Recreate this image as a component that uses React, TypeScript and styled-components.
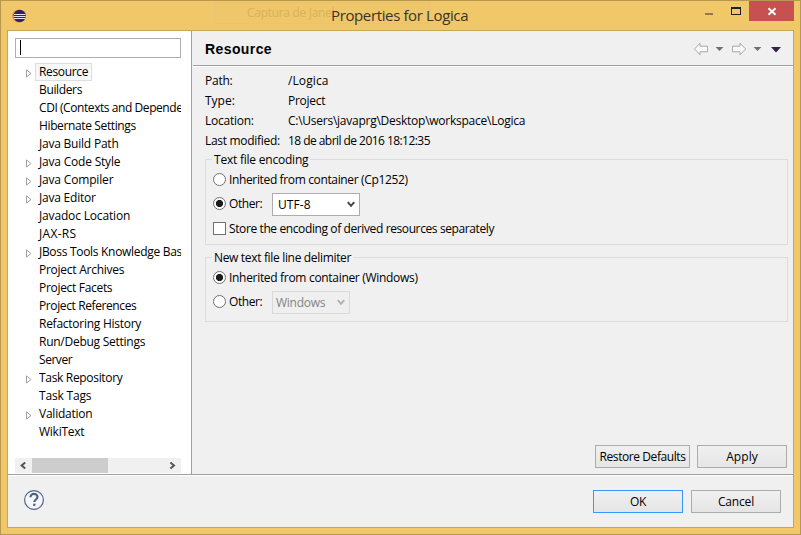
import React from "react";
import styled, { createGlobalStyle } from "styled-components";

const GlobalStyle = createGlobalStyle`
  * { box-sizing: border-box; }
  body { margin: 0; overflow: hidden; }
  svg { display: block; flex: none; }
`;

const Window = styled.div`
  width: 801px;
  height: 535px;
  display: flex;
  flex-direction: column;
  padding: 0 6px 6px;
  border: 1px solid #b8984f;
  background: #f0c869;
  font: 12px/18px "Open Sans", "Noto Sans", sans-serif;
  color: #000;
`;

const TitleBar = styled.header`
  position: relative;
  flex: none;
  display: flex;
  justify-content: space-between;
  height: 29px;
`;

const AppIcon = styled.div`
  padding: 8px 0 0 5px;
`;

const Ghost = styled.div`
  position: absolute;
  left: 207px;
  top: 1px;
  width: 216px;
  height: 22px;
  border: 1px solid #ecc272;
  background: #eec76b;
  padding-left: 32px;
  line-height: 19px;
  letter-spacing: -0.3px;
  color: #d9b15a;
`;

const Title = styled.h1`
  position: absolute;
  left: 324px;
  top: 3px;
  margin: 0;
  font-size: 15px;
  font-weight: 400;
  line-height: 22px;
  letter-spacing: -0.37px;
  white-space: nowrap;
  color: #3b3426;
`;

const Controls = styled.div`
  display: flex;
  align-items: flex-start;
  margin-left: auto;
`;

const CloseButton = styled.div`
  display: flex;
  width: 45px;
  height: 20px;
  background: #c75050;
`;

const Client = styled.main`
  flex: 1;
  display: flex;
  flex-direction: column;
  border: 1px solid #c9a655;
  background: #f0f0f0;
`;

const Body = styled.div`
  display: flex;
  height: 443px;
`;

const Sidebar = styled.nav`
  width: 184px;
  flex: none;
  padding: 7px 10px 0 7px;
  background: #fff;
  border-right: 1px solid #a0a0a0;
`;

const Filter = styled.div`
  width: 166px;
  height: 20px;
  margin-bottom: 5px;
  padding: 1px 0 0 4px;
  border: 1px solid #abadb3;
`;

const Caret = styled.div`
  width: 1px;
  height: 15px;
  background: #000;
`;

const Tree = styled.div`
  width: 166px;
  height: 395px;
  overflow: hidden;
`;

const TreeRow = styled.div`
  display: flex;
  height: 18px;
`;

const Twisty = styled.div`
  width: 20px;
  flex: none;
  padding: 6px 0 0 11px;
`;

const TreeLabel = styled.span<{ $ls: number; $selected?: boolean }>`
  height: 18px;
  padding: 0 3px;
  border: 1px solid ${(p) => (p.$selected ? "#dedede" : "transparent")};
  background: ${(p) => (p.$selected ? "#f7f7f7" : "transparent")};
  line-height: 15px;
  letter-spacing: ${(p) => p.$ls}px;
  white-space: nowrap;
`;

const ScrollBar = styled.div`
  display: flex;
  align-items: center;
  width: 166px;
  height: 15px;
  background: #f0f0f0;
`;

const Thumb = styled.div`
  width: 76px;
  height: 15px;
  margin-right: 56px;
  background: #cdcdcd;
`;

const Content = styled.section`
  flex: 1;
  display: flex;
  flex-direction: column;
  margin-left: 1px;
`;

const Header = styled.div`
  display: flex;
  justify-content: space-between;
  height: 36px;
  flex: none;
  padding: 0 11px 0 12px;
  border-bottom: 1px solid #fff;
  box-shadow: inset 0 -1px #a0a0a0;
`;

const Heading = styled.h2`
  margin: 0;
  font: bold 14px/36px "Liberation Sans", Arial, sans-serif;
  letter-spacing: 0.4px;
`;

const Page = styled.div`
  flex: 1;
  display: flex;
  flex-direction: column;
  padding: 4px 5px 6px 12px;
`;

const Properties = styled.dl`
  display: grid;
  grid-template-columns: 83px 1fr;
  grid-auto-rows: 20px;
  margin: 0;
  line-height: 20px;
`;

const Term = styled.dt`
  white-space: nowrap;
`;

const Value = styled.dd`
  margin: 0;
`;

const Text = styled.span<{ $ls: number; $width?: number }>`
  width: ${(p) => (p.$width ? `${p.$width}px` : "auto")};
  letter-spacing: ${(p) => p.$ls}px;
  white-space: nowrap;
`;

const Group = styled.fieldset<{ $height: number; $top: number }>`
  min-width: 0;
  height: ${(p) => p.$height}px;
  margin: ${(p) => p.$top}px 0 0;
  padding: 0 7px;
  border: 1px solid #dcdcdc;
`;

const Legend = styled.div`
  width: fit-content;
  height: 18px;
  margin-top: -9px;
  margin-left: -1px;
  padding: 0 2px;
  background: #f0f0f0;
`;

const Option = styled.div<{ $height: number }>`
  display: flex;
  align-items: center;
  height: ${(p) => p.$height}px;
`;

const Radio = styled.span<{ $checked?: boolean }>`
  width: 13px;
  height: 13px;
  flex: none;
  margin-right: 3px;
  border: 1px solid #707070;
  border-radius: 50%;
  background: ${(p) =>
    p.$checked ? "radial-gradient(circle, #1c1c1c 3.2px, #fff 4px)" : "#fff"};
`;

const Check = styled.span`
  width: 13px;
  height: 13px;
  flex: none;
  margin-right: 3px;
  border: 1px solid #707070;
  background: #fff;
`;

const Combo = styled.div<{ $width: number; $disabled?: boolean }>`
  display: flex;
  align-items: center;
  justify-content: space-between;
  width: ${(p) => p.$width}px;
  height: 23px;
  margin: 2px 0 0 10px;
  padding: 0 4px 0 ${(p) => (p.$disabled ? 3 : 5)}px;
  border: 1px solid ${(p) => (p.$disabled ? "#d9d9d9" : "#abadb3")};
  background: ${(p) => (p.$disabled ? "#efefef" : "#fff")};
  color: ${(p) => (p.$disabled ? "#838383" : "#000")};
  line-height: 19px;
`;

const Actions = styled.div`
  display: flex;
  justify-content: flex-end;
  gap: 7px;
  margin: auto 1px 0 0;
`;

const Button = styled.button<{ $width?: number; $ls: number; $primary?: boolean }>`
  width: ${(p) => p.$width ?? 90}px;
  height: 23px;
  padding: 1px 0 0;
  border: 1px solid ${(p) => (p.$primary ? "#3399ff" : "#acacac")};
  background: linear-gradient(#f0f0f0, #e5e5e5);
  font: inherit;
  line-height: 20px;
  letter-spacing: ${(p) => p.$ls}px;
  color: #000;
  white-space: nowrap;
`;

const Footer = styled.footer`
  flex: 1;
  display: flex;
  align-items: flex-start;
  gap: 8px;
  padding: 15px 12px 0 15px;
  border-top: 1px solid #a0a0a0;
  box-shadow: inset 0 1px #fff;
`;

const HelpSlot = styled.div`
  margin: -1px auto 0 0;
`;

const NavIcons = styled.div`
  display: flex;
  padding-top: 11px;
`;

type Item = { text: string; ls: number; parent?: boolean };

const items: Item[] = [
  { text: "Resource", ls: -0.35, parent: true },
  { text: "Builders", ls: -0.36 },
  { text: "CDI (Contexts and Dependency Injection)", ls: -0.43 },
  { text: "Hibernate Settings", ls: -0.37 },
  { text: "Java Build Path", ls: -0.22 },
  { text: "Java Code Style", ls: -0.2, parent: true },
  { text: "Java Compiler", ls: -0.17, parent: true },
  { text: "Java Editor", ls: -0.22, parent: true },
  { text: "Javadoc Location", ls: -0.16 },
  { text: "JAX-RS", ls: 0.3 },
  { text: "JBoss Tools Knowledge Base", ls: -0.3, parent: true },
  { text: "Project Archives", ls: -0.26 },
  { text: "Project Facets", ls: -0.31 },
  { text: "Project References", ls: -0.39 },
  { text: "Refactoring History", ls: -0.26 },
  { text: "Run/Debug Settings", ls: -0.26 },
  { text: "Server", ls: -0.45 },
  { text: "Task Repository", ls: -0.32, parent: true },
  { text: "Task Tags", ls: -0.18 },
  { text: "Validation", ls: -0.23, parent: true },
  { text: "WikiText", ls: -0.25 },
];

const properties = [
  { name: "Path:", nameLs: -0.25, value: "/Logica", valueLs: 0.1 },
  { name: "Type:", nameLs: 0, value: "Project", valueLs: -0.25 },
  {
    name: "Location:",
    nameLs: -0.25,
    value: "C:\\Users\\javaprg\\Desktop\\workspace\\Logica",
    valueLs: -0.25,
  },
  {
    name: "Last modified:",
    nameLs: -0.3,
    value: "18 de abril de 2016 18:12:35",
    valueLs: -0.55,
  },
];

const Arrow = () => (
  <svg width="7" height="9" viewBox="0 0 7 9">
    <path d="M.5.9v7.2L5 4.5z" fill="#fff" stroke="#a0a0a0" />
  </svg>
);

const ComboChevron = ({ color }: { color: string }) => (
  <svg width="8" height="7" viewBox="0 0 8 7">
    <path d="M.8 1.2 4 4.8l3.2-3.6" fill="none" stroke={color} strokeWidth="2" />
  </svg>
);

const ScrollChevron = ({ flip }: { flip?: boolean }) => (
  <svg width="17" height="15" viewBox="0 0 17 15">
    <path
      d={flip ? "M6.4 4.4 10 7.5l-3.6 3.1" : "M10.2 4.4 6.6 7.5l3.6 3.1"}
      fill="none"
      stroke="#555"
      strokeWidth="2"
    />
  </svg>
);

const EclipseLogo = () => (
  <svg width="14" height="14" viewBox="0 0 14 14">
    <circle cx="6.4" cy="7" r="6.4" fill="#f59a23" />
    <circle cx="7.7" cy="7" r="6.2" fill="#2f2460" />
    <path d="M2 5.5h11.5M1.5 7.5h12.2M2 9.5h11.5" stroke="#e6e2f2" />
  </svg>
);

const WindowButtons = () => (
  <svg width="48" height="20" viewBox="0 0 48 20">
    <path d="M4 12h8v2H4z" fill="#94794a" />
    <path d="M30 6h10v8H30zm1 2v5h8V8z" fill="#1f1f1f" fillRule="evenodd" />
  </svg>
);

const CloseMark = () => (
  <svg width="45" height="20" viewBox="0 0 45 20">
    <path d="m19.5 7.2 7 6.6m0-6.6-7 6.6" stroke="#fff" strokeWidth="1.9" />
  </svg>
);

const NavArrows = () => (
  <svg width="88" height="14" viewBox="0 0 88 14">
    <g fill="#f8f8f8" stroke="#a9a9a9" strokeLinejoin="round">
      <path d="M.5 7 6 1.2v3h7.5v5.6H6v3z" />
      <path d="M51.7 7 46 1.2v3h-7.5v5.6H46v3z" />
    </g>
    <path d="M21.6 5h7.8l-3.9 4zM59.6 5h7.8l-3.9 4z" fill="#6f6f73" />
    <path d="M77 5h10l-5 5.4z" fill="#32204f" />
  </svg>
);

const HelpMark = () => (
  <svg width="22" height="22" viewBox="0 0 22 22">
    <circle cx="11" cy="11" r="9.4" fill="#f3f6fa" stroke="#566683" strokeWidth="1.2" />
    <path
      d="M7.4 8.2C7.4 5.9 9 4.9 11 4.9s3.5 1.2 3.5 3c0 2.5-3.2 2.6-3.2 5.2"
      fill="none"
      stroke="#4f6080"
      strokeWidth="2.1"
    />
    <path d="M10.1 14.7h2.3v2.2h-2.3z" fill="#4f6080" />
  </svg>
);

export default function App() {
  return (
    <Window>
      <GlobalStyle />
      <TitleBar>
        <AppIcon>
          <EclipseLogo />
        </AppIcon>
        <Ghost>Captura de Janel</Ghost>
        <Title>Properties for Logica</Title>
        <Controls>
          <WindowButtons />
          <CloseButton>
            <CloseMark />
          </CloseButton>
        </Controls>
      </TitleBar>
      <Client>
        <Body>
          <Sidebar>
            <Filter>
              <Caret />
            </Filter>
            <Tree>
              {items.map((item, i) => (
                <TreeRow key={item.text}>
                  <Twisty>{item.parent && <Arrow />}</Twisty>
                  <TreeLabel $ls={item.ls} $selected={i === 0}>
                    {item.text}
                  </TreeLabel>
                </TreeRow>
              ))}
            </Tree>
            <ScrollBar>
              <ScrollChevron />
              <Thumb />
              <ScrollChevron flip />
            </ScrollBar>
          </Sidebar>
          <Content>
            <Header>
              <Heading>Resource</Heading>
              <NavIcons>
                <NavArrows />
              </NavIcons>
            </Header>
            <Page>
              <Properties>
                {properties.map((p) => (
                  <React.Fragment key={p.name}>
                    <Term>
                      <Text $ls={p.nameLs}>{p.name}</Text>
                    </Term>
                    <Value>
                      <Text $ls={p.valueLs}>{p.value}</Text>
                    </Value>
                  </React.Fragment>
                ))}
              </Properties>
              <Group $height={86} $top={8}>
                <Legend>
                  <Text $ls={-0.22}>Text file encoding</Text>
                </Legend>
                <Option $height={21}>
                  <Radio />
                  <Text $ls={-0.36}>Inherited from container (Cp1252)</Text>
                </Option>
                <Option $height={27}>
                  <Radio $checked />
                  <Text $ls={-0.4} $width={33}>
                    Other:
                  </Text>
                  <Combo $width={88}>
                    <Text $ls={0.1}>UTF-8</Text>
                    <ComboChevron color="#444" />
                  </Combo>
                </Option>
                <Option $height={23}>
                  <Check />
                  <Text $ls={-0.39}>
                    Store the encoding of derived resources separately
                  </Text>
                </Option>
              </Group>
              <Group $height={65} $top={12}>
                <Legend>
                  <Text $ls={-0.33}>New text file line delimiter</Text>
                </Legend>
                <Option $height={21}>
                  <Radio $checked />
                  <Text $ls={-0.31}>Inherited from container (Windows)</Text>
                </Option>
                <Option $height={27}>
                  <Radio />
                  <Text $ls={-0.4} $width={33}>
                    Other:
                  </Text>
                  <Combo $width={78} $disabled>
                    <Text $ls={-0.25}>Windows</Text>
                    <ComboChevron color="#b0b0b0" />
                  </Combo>
                </Option>
              </Group>
              <Actions>
                <Button $width={95} $ls={-0.42}>
                  Restore Defaults
                </Button>
                <Button $ls={0.05}>Apply</Button>
              </Actions>
            </Page>
          </Content>
        </Body>
        <Footer>
          <HelpSlot>
            <HelpMark />
          </HelpSlot>
          <Button $ls={-0.3} $primary>
            OK
          </Button>
          <Button $ls={-0.15}>Cancel</Button>
        </Footer>
      </Client>
    </Window>
  );
}
